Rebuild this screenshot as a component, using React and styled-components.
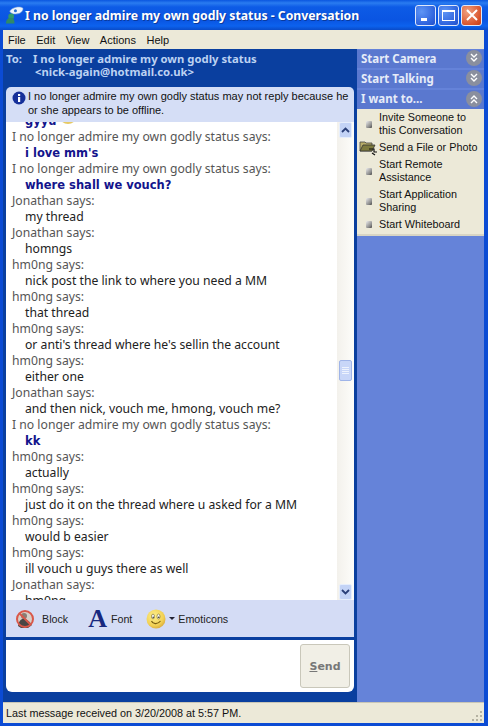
import React from "react";
import styled, { createGlobalStyle } from "styled-components";

const UI = '"Liberation Sans", Arial, sans-serif';
const Global = createGlobalStyle`
  html, body { margin: 0; padding: 0; background: #0a4ad0; }
  * { box-sizing: border-box; }
  body { font-family: "Noto Sans", "DejaVu Sans", sans-serif; }
`;

const Win = styled.div`
  width: 488px; height: 726px; display: flex; flex-direction: column;
  padding: 0 4px 3px 3px; overflow: hidden;
  background: #0b4bd4;
`;
const TitleBar = styled.div`
  height: 30px; margin: 0 -4px 0 -3px; padding: 0 6px 0 5px; flex: none;
  display: flex; align-items: center;
  background: linear-gradient(#0a56e0 0, #2a7cf0 3px, #0d5be6 7px, #0a55e2 20px, #0c62ee 26px, #0a4bc8 30px);
`;
const TitleText = styled.div`
  flex: 1; min-width: 0; margin-left: 1px; padding-top: 1px; color: #fff; font-weight: 700; font-size: 12.25px;
  font-family: "Noto Sans", sans-serif; white-space: nowrap; text-shadow: 1px 1px 0 #0a3a9c;
`;
const WinBtn = styled.div`
  width: 21px; height: 21px; border: 1px solid #dfe8fb; border-radius: 3px;
  margin-left: 2px; display: flex; align-items: center; justify-content: center;
  background: ${p => p.$close
    ? "radial-gradient(circle at 30% 30%, #f0a080, #d9542c 70%, #c23c18)"
    : "radial-gradient(circle at 30% 30%, #5f95f5, #2f63dd 70%, #2350c8)"};
`;
const MenuBar = styled.div`
  height: 19px; flex: none; padding: 0 0 0 5px;
  display: flex; align-items: center; gap: 10.5px; background: #ece9d8;
  font-family: ${UI}; font-size: 11px; color: #111;
`;
const Body = styled.div`flex: 1; display: flex; min-height: 0;`;
const Left = styled.div`
  width: 354px; flex: none; display: flex; flex-direction: column;
  background: #0a3f9f; padding: 0 3px 10px 3px;
`;
const ToRow = styled.div`
  height: 38px; flex: none; display: grid; grid-template-columns: 27px 1fr;
  padding-top: 3px; color: #bcd2f2; font-weight: 700; font-size: 11.3px;
  font-family: "Noto Sans", sans-serif; line-height: 13px; white-space: nowrap;
`;
const Addr = styled.div`padding-left: 2px;`;
const Notice = styled.div`
  height: 35px; flex: none; display: flex; gap: 2px; padding: 3px 0 0 6px;
  background: #d5def6; border-radius: 5px 5px 0 0;
  font-family: ${UI}; font-size: 11px; line-height: 13.5px; color: #111; white-space: nowrap;
`;
const ChatWrap = styled.div`
  height: 478px; flex: none; display: flex; background: #fff; overflow: hidden;
`;
const Chat = styled.div`
  flex: 1; min-width: 0; overflow: hidden; padding-left: 6px; font-size: 12.2px; line-height: 16px;
`;
const ChatInner = styled.div`margin-top: -9px;`;
const Says = styled.div`color: #555; white-space: nowrap;`;
const Msg = styled.div`
  padding-left: 13px; white-space: nowrap;
  color: ${p => p.$me ? "#13148c" : "#222"};
  font-weight: ${p => p.$me ? 700 : 400};
  font-family: ${p => p.$me ? '"DejaVu Sans", sans-serif' : "inherit"};
  font-size: ${p => p.$me ? "11.5px" : "inherit"};
`;
const Scroll = styled.div`
  width: 17px; flex: none; padding: 0 2px; display: flex; flex-direction: column; justify-content: space-between;
  position: relative; background: linear-gradient(90deg, #f3f1ec, #fdfdfa);
`;
const Arrow = styled.div`
  height: 16px; background: #c3d3f6; border: 1px solid #e6eefc; border-radius: 2px;
  display: flex; align-items: center; justify-content: center;
`;
const Thumb = styled.div`
  position: absolute; top: 238px; left: 2px; width: 13px; height: 21px;
  background: #c8d6f8; border: 1px solid #9fb4e8; border-radius: 2px;
  display: flex; flex-direction: column; justify-content: center; gap: 1px; align-items: center;
  i { display: block; width: 7px; height: 1px; background: #eef3fd; }
`;
const Toolbar = styled.div`
  height: 37px; flex: none; display: flex; align-items: center; padding-left: 9px;
  background: #d4dcf5; font-family: ${UI}; font-size: 10.7px; color: #222;
`;
const Tool = styled.div`display: flex; align-items: center; margin-right: ${p => p.$mr}px; gap: ${p => p.$gap}px;`;
const FontA = styled.span`
  font-family: "Liberation Serif", serif; font-weight: 700; font-size: 26px; color: #17287f; line-height: 20px;
`;
const InputArea = styled.div`
  height: 52px; margin-top: 3px; flex: none; background: #fff; border-radius: 0 0 6px 6px;
  display: flex; justify-content: flex-end; align-items: center; padding: 0 4px 0 0;
`;
const Send = styled.div`
  width: 50px; height: 44px; background: #f1efe6; border: 1px solid #c9c7ba; border-radius: 3px;
  display: flex; align-items: center; justify-content: center;
  font-family: "DejaVu Sans", sans-serif; font-weight: 700; font-size: 11px; color: #777;
  u { text-decoration: underline; }
`;
const Right = styled.div`
  flex: 1; background: #6583d9; padding: 1px 0 0 0;
  display: flex; flex-direction: column; gap: 2px;
`;
const PanelHead = styled.div`
  height: ${p => p.$h || 18}px; display: flex; align-items: center; justify-content: space-between;
  padding: 0 2px 2px 4px; background: #5a78cf; color: #e6ecf8;
  font-weight: 700; font-size: 11.5px; font-family: "Noto Sans", sans-serif;
`;
const Chevron = styled.div`
  width: 16px; height: 16px; border-radius: 50%; background: #8a8f9e;
  display: flex; align-items: center; justify-content: center;
`;
const TaskList = styled.div`
  margin-top: -2px; height: 127px; background: #ece9d8; border-bottom: 2px solid #d8d5c4;
  padding-top: 2px; font-family: ${UI}; font-size: 10.8px; line-height: 13px; color: #111; white-space: nowrap;
`;
const Task = styled.div`
  display: grid; grid-template-columns: 22px 1fr; align-items: center;
  padding-bottom: ${p => p.$pb || 0}px;
`;
const TaskIcon = styled.div`display: flex; justify-content: center; height: 13px; align-items: center;`;
const Bullet = styled.div`
  width: 6px; height: 7px; margin-left: 1px; border-radius: 1px;
  background: linear-gradient(135deg, #eee, #888 70%, #444);
`;
const Status = styled.div`
  height: 21px; flex: none; display: flex; align-items: center; padding-left: 3px;
  background: #ece9d8; border-top: 1px solid #c9c6b6; font-family: ${UI}; font-size: 10.8px; color: #111; position: relative;
`;
const Grip = styled.svg`position: absolute; right: 1px; bottom: 1px;`;

const Logo = () => (
  <svg width="19" height="20" viewBox="0 0 20 20" style={{ flex: "none" }}>
    <path d="M5 6c2-4 11-6 14-3 0 4-4 6-8 6-3 0-5-1-6-3z" fill="#eef4fc" stroke="#7fa6dc" strokeWidth=".6" />
    <circle cx="6.5" cy="11.5" r="3" fill="#2f9a6e" />
    <path d="M1 19c0-4 2-6 5-6s4 2 4 6z" fill="#2f8a68" />
    <circle cx="11" cy="5.5" r="1.6" fill="#2a6fd0" />
  </svg>
);
const Min = () => <svg width="13" height="13"><rect x="2" y="9" width="6" height="3" fill="#fff" /></svg>;
const Max = () => <svg width="15" height="15"><rect x="1.5" y="2.5" width="12" height="10" fill="none" stroke="#fff" /><rect x="1" y="2" width="13" height="2" fill="#fff" /></svg>;
const Close = () => <svg width="14" height="14"><path d="M2 2l10 10M12 2L2 12" stroke="#fff" strokeWidth="2" /></svg>;
const Chev = ({ up }) => (
  <svg width="10" height="10" viewBox="0 0 10 10" style={up ? { transform: "scaleY(-1)" } : undefined}>
    <path d="M2 1l3 3 3-3M2 5l3 3 3-3" fill="none" stroke="#fff" strokeWidth="1.4" />
  </svg>
);
const Info = () => (
  <svg width="14" height="14" viewBox="0 0 14 14" style={{ flex: "none", marginTop: 1 }}>
    <circle cx="7" cy="7" r="6.5" fill="#16309a" />
    <rect x="6" y="3" width="2.2" height="2" fill="#fff" />
    <rect x="6" y="6" width="2.2" height="5" fill="#fff" />
  </svg>
);
const BlockIcon = () => (
  <svg width="20" height="20" viewBox="0 0 20 20">
    <circle cx="10" cy="10" r="8" fill="#d8cfc8" />
    <circle cx="9" cy="7" r="3" fill="#8a7d74" />
    <path d="M3 17c1-6 4-8 7-7s5 3 7 6l-4 3H6z" fill="#4a4644" />
    <circle cx="10" cy="10" r="8" fill="none" stroke="#d9584a" strokeWidth="2" />
    <path d="M4.5 4.5l11 11" stroke="#d9584a" strokeWidth="1.8" />
  </svg>
);
const Smile = () => (
  <svg width="20" height="20" viewBox="0 0 20 20">
    <defs>
      <radialGradient id="sm" cx=".4" cy=".35" r=".7">
        <stop offset="0" stopColor="#fdf08e" />
        <stop offset=".7" stopColor="#f2d154" />
        <stop offset="1" stopColor="#d9a93a" />
      </radialGradient>
    </defs>
    <circle cx="10" cy="10" r="9.5" fill="url(#sm)" />
    <ellipse cx="7" cy="7.5" rx="1.5" ry="2.4" fill="#fff" stroke="#6a5a10" strokeWidth=".6" />
    <ellipse cx="12.5" cy="7.5" rx="1.5" ry="2.4" fill="#fff" stroke="#6a5a10" strokeWidth=".6" />
    <circle cx="7.2" cy="8.2" r=".8" fill="#333" />
    <circle cx="12.7" cy="8.2" r=".8" fill="#333" />
    <path d="M5.5 12c1 3 6 4 9 0" fill="none" stroke="#7a5f10" strokeWidth="1.1" />
  </svg>
);
const Caret = () => <svg width="6" height="4"><path d="M0 0h6L3 3z" fill="#223" /></svg>;
const Folder = () => (
  <svg width="19" height="16" viewBox="0 0 19 16" style={{ flex: "none", marginLeft: 1 }}>
    <path d="M1 2h5l1 1h6v8H1z" fill="#b7ac68" stroke="#444" strokeWidth=".8" />
    <path d="M1 11l3-6h12l-3 6z" fill="#7d7a3e" stroke="#333" strokeWidth=".8" />
    <path d="M10 9h5v3h3M13 13l3 2" stroke="#111" strokeWidth="1.2" fill="none" />
  </svg>
);
const ArrowGlyph = ({ up }) => (
  <svg width="9" height="6" viewBox="0 0 9 6">
    <path d={up ? "M1 5l3.5-3.5L8 5" : "M1 1l3.5 3.5L8 1"} fill="none" stroke="#2a3f78" strokeWidth="1.8" />
  </svg>
);
const Tiny = () => (
  <svg width="18" height="10" viewBox="0 0 18 10" style={{ marginLeft: 3 }}>
    <circle cx="9" cy="0" r="9" fill="#e6c964" />
  </svg>
);

const LONG = "I no longer admire my own godly status says:";
const chat = [
  [LONG, "i love mm's", true], [LONG, "where shall we vouch?", true],
  ["Jonathan says:", "my thread"], ["Jonathan says:", "homngs"],
  ["hm0ng says:", "nick post the link to where you need a MM"],
  ["hm0ng says:", "that thread"],
  ["hm0ng says:", "or anti's thread where he's sellin the account"],
  ["hm0ng says:", "either one"],
  ["Jonathan says:", "and then nick, vouch me, hmong, vouch me?"],
  [LONG, "kk", true],
  ["hm0ng says:", "actually"],
  ["hm0ng says:", "just do it on the thread where u asked for a MM"],
  ["hm0ng says:", "would b easier"],
  ["hm0ng says:", "ill vouch u guys there as well"],
  ["Jonathan says:", "hm0ng"],
];

export default function App() {
  return (
    <>
      <Global />
      <Win>
        <TitleBar>
          <Logo />
          <TitleText>I no longer admire my own godly status - Conversation</TitleText>
          <WinBtn><Min /></WinBtn>
          <WinBtn><Max /></WinBtn>
          <WinBtn $close><Close /></WinBtn>
        </TitleBar>
        <MenuBar>
          <span>File</span><span>Edit</span><span>View</span><span>Actions</span><span>Help</span>
        </MenuBar>
        <Body>
          <Left>
            <ToRow>
              <span>To:</span>
              <div>
                I no longer admire my own godly status
                <Addr>&lt;nick-again@hotmail.co.uk&gt;</Addr>
              </div>
            </ToRow>
            <Notice>
              <Info />
              <div>I no longer admire my own godly status may not reply because he<br />or she appears to be offline.</div>
            </Notice>
            <ChatWrap>
              <Chat>
                <ChatInner>
                  <Msg $me>gyyu<Tiny /></Msg>
                  {chat.map(([who, text, me], i) => (
                    <React.Fragment key={i}>
                      <Says>{who}</Says>
                      <Msg $me={me}>{text}</Msg>
                    </React.Fragment>
                  ))}
                </ChatInner>
              </Chat>
              <Scroll>
                <Arrow><ArrowGlyph up /></Arrow>
                <Thumb><i /><i /><i /><i /></Thumb>
                <Arrow><ArrowGlyph /></Arrow>
              </Scroll>
            </ChatWrap>
            <Toolbar>
              <Tool $gap={7} $mr={20}><BlockIcon />Block</Tool>
              <Tool $gap={4} $mr={14}><FontA>A</FontA>Font</Tool>
              <Tool $gap={3}><Smile /><Caret />Emoticons</Tool>
            </Toolbar>
            <InputArea>
              <Send><span><u>S</u>end</span></Send>
            </InputArea>
          </Left>
          <Right>
            <PanelHead>Start Camera<Chevron><Chev /></Chevron></PanelHead>
            <PanelHead>Start Talking<Chevron><Chev /></Chevron></PanelHead>
            <PanelHead $h={19}>I want to...<Chevron><Chev up /></Chevron></PanelHead>
            <TaskList>
              <Task $pb={4}><TaskIcon><Bullet /></TaskIcon><span>Invite Someone to<br />this Conversation</span></Task>
              <Task $pb={4}><TaskIcon><Folder /></TaskIcon><span>Send a File or Photo</span></Task>
              <Task $pb={4}><TaskIcon><Bullet /></TaskIcon><span>Start Remote<br />Assistance</span></Task>
              <Task $pb={4}><TaskIcon><Bullet /></TaskIcon><span>Start Application<br />Sharing</span></Task>
              <Task><TaskIcon><Bullet /></TaskIcon><span>Start Whiteboard</span></Task>
            </TaskList>
          </Right>
        </Body>
        <Status>
          Last message received on 3/20/2008 at 5:57 PM.
          <Grip width="12" height="12">
            <g fill="#b5b2a2"><rect x="9" y="1" width="2" height="2" /><rect x="5" y="5" width="2" height="2" /><rect x="9" y="5" width="2" height="2" /><rect x="1" y="9" width="2" height="2" /><rect x="5" y="9" width="2" height="2" /><rect x="9" y="9" width="2" height="2" /></g>
          </Grip>
        </Status>
      </Win>
    </>
  );
}
